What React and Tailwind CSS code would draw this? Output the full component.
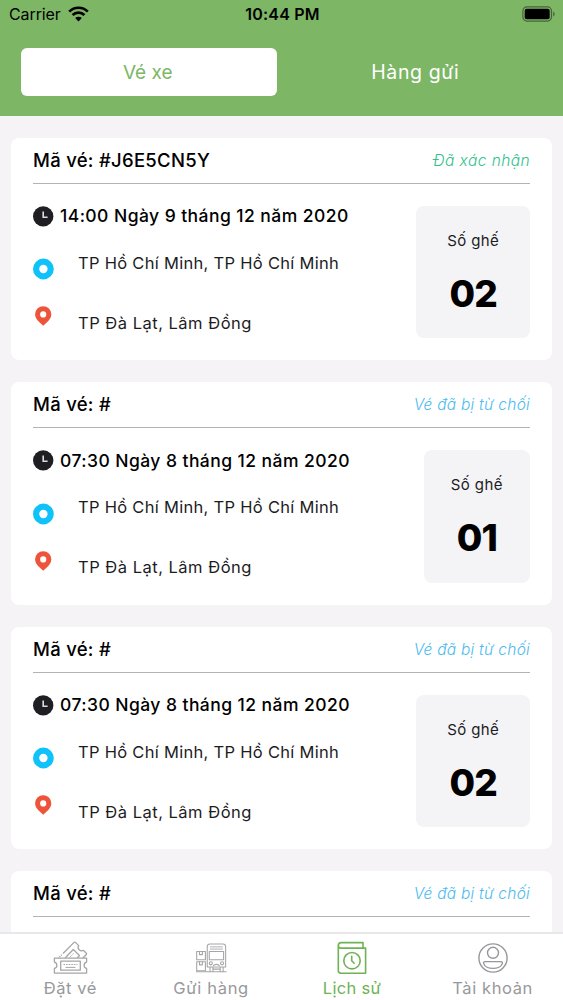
const tickets = [
  {
    code: "J6E5CN5Y",
    status: "Đã xác nhận",
    statusCls: "text-[#2fc18c] tracking-[0.4px]",
    time: "14:00 Ngày 9 tháng 12 năm 2020",
    seat: "02",
  },
  {
    code: "",
    status: "Vé đã bị từ chối",
    statusCls: "text-[#4dbbee] tracking-[0.25px]",
    time: "07:30 Ngày 8 tháng 12 năm 2020",
    seat: "01",
  },
  {
    code: "",
    status: "Vé đã bị từ chối",
    statusCls: "text-[#4dbbee] tracking-[0.25px]",
    time: "07:30 Ngày 8 tháng 12 năm 2020",
    seat: "02",
  },
  {
    code: "",
    status: "Vé đã bị từ chối",
    statusCls: "text-[#4dbbee] tracking-[0.25px]",
  },
];

function WifiIcon() {
  return (
    <svg width="21" height="16" viewBox="0 0 21 16" fill="none" stroke="#000" strokeWidth="2.7">
      <path d="M1.2 5.6a13.2 13.2 0 0 1 18.6 0" />
      <path d="M4.6 9a8.4 8.4 0 0 1 11.8 0" />
      <path d="M10.5 15.4 7.2 12a4.7 4.7 0 0 1 6.6 0Z" fill="#000" stroke="none" />
    </svg>
  );
}

function BatteryIcon() {
  return (
    <svg width="34" height="16" viewBox="0 0 34 16">
      <rect x="0.9" y="0.9" width="28.6" height="14.2" rx="4" fill="none" stroke="#000" strokeOpacity="0.45" strokeWidth="1.2" />
      <rect x="2.7" y="2.8" width="25" height="10.4" rx="2" />
      <path d="M31.3 5.5c1.7.7 1.7 4.3 0 5Z" opacity="0.5" />
    </svg>
  );
}

function ClockIcon() {
  return (
    <svg width="21" height="22" viewBox="0 0 21 22" fill="none">
      <circle cx="10.2" cy="10.4" r="10.2" fill="#1f1e23" />
      <path d="M10.2 5.4v5.8h4.4" stroke="#dddde0" strokeWidth="1.6" />
    </svg>
  );
}

function StartIcon() {
  return (
    <svg width="21" height="22" viewBox="0 0 21 22">
      <circle cx="10.4" cy="11" r="7.3" fill="none" stroke="#0fc2fa" strokeWidth="6.2" />
    </svg>
  );
}

function PinIcon() {
  return (
    <svg width="21" height="22" viewBox="0.8 0 21 22">
      <path
        fill="#ee5439"
        fillRule="evenodd"
        d="M11 1.2a8.1 8.1 0 0 0-8.1 8.1c0 2.9 1.4 4.9 3 6.6L11 20.8l5.1-4.9c1.6-1.7 3-3.7 3-6.6A8.1 8.1 0 0 0 11 1.2Zm0 5.1a3.1 3.1 0 1 1 0 6.2 3.1 3.1 0 0 1 0-6.2Z"
      />
    </svg>
  );
}

function TicketsIcon() {
  return (
    <svg width="35" height="34" viewBox="0 0 34 34" fill="none" stroke="#a5a5a8" strokeWidth="1.3" strokeLinejoin="round">
      <path d="M.9 17.1h32.2v4a3.3 3.3 0 0 0 0 6.4v4.6H.9v-4.6a3.3 3.3 0 0 0 0-6.4Z" />
      <rect x="7.2" y="20.2" width="19.6" height="9" />
      <path d="M10 23.5h14" strokeWidth="1" strokeDasharray="1.6 1" />
      <path d="M12 26.4h10" strokeWidth="1" />
      <path d="M9.5 12.5 20.3 1.6c.6-.6 1.3-.6 1.9 0l3 3a3.4 3.4 0 0 0 4.6 4.7l2.8 2.6c.6.6.6 1.2 0 1.8L29.3 17" />
      <path d="M8.3 13.7 5 17" strokeDasharray="1.2 1" />
      <path d="m11.8 16.8 8-8.3 6.2 6-2.3 2.5" />
      <path d="m16.2 16.4 4.2-4.2" strokeWidth="1" strokeDasharray="1.6 1" />
    </svg>
  );
}

function CargoIcon() {
  return (
    <svg width="31" height="30" viewBox="0 0 32 31" fill="none" stroke="#a5a5a8" strokeWidth="1.1" strokeLinejoin="round">
      <path d="M.7 8.8h9v8.6h-9zM.7 19.4h9v9.2h-9z" />
      <path d="M3.6 8.8v3.2h3V8.8M3.6 19.4v3.2h3v-3.2" />
      <path d="M11.6 24.8V4c0-1.9 1-2.9 2.9-2.9h13.2c1.9 0 2.9 1 2.9 2.9v20.8Z" />
      <path d="M14.4 4h13.4M14.4 6.3h13.4" strokeWidth="0.9" />
      <path d="M13.7 8.7h14.8v8.6H13.7z" />
      <circle cx="15.3" cy="21" r="1.6" />
      <circle cx="26.9" cy="21" r="1.6" />
      <path d="M17.8 23.6c1.4-2 5.2-2 6.6 0" />
      <path d="M14.5 24.8v4.4M17.5 24.8v4.4M25 24.8v4.4M28 24.8v4.4M17.5 27H25M0 29.7h31.5" />
    </svg>
  );
}

function HistoryIcon() {
  return (
    <svg width="30" height="34" viewBox="0 0 30 34" fill="none" stroke="#6fb356" strokeWidth="1.6" strokeLinejoin="round" strokeLinecap="round">
      <path d="M26 7.1V1.6H4.2a2.9 2.9 0 0 0-2.9 2.8c0 1.6 1.2 2.7 2.9 2.7h24.4v25.1H3.9a2.6 2.6 0 0 1-2.6-2.6V4.4" />
      <circle cx="15" cy="19.7" r="8.2" />
      <path d="M14.7 15.4v4.4l2.4 2.5" />
    </svg>
  );
}

function AccountIcon() {
  return (
    <svg width="30" height="30" viewBox="0 0 30 30" fill="none" stroke="#97979b" strokeWidth="1.4">
      <circle cx="15" cy="15" r="14.1" />
      <circle cx="15" cy="9.8" r="5.5" />
      <path d="M7.2 18.6h15.6c1.3 0 1.9.8 1.5 2-.9 2.9-5 4.8-9.3 4.8s-8.4-1.9-9.3-4.8c-.4-1.2.2-2 1.5-2Z" />
    </svg>
  );
}

function TicketCard({ ticket }) {
  return (
    <article className="h-[222.5px] shrink-0 rounded-lg bg-white px-[22px]">
      <div className="flex h-[46px] items-center justify-between border-b border-[#b3b3b6]">
        <h2 className="pt-px text-[18.5px] font-[450] tracking-[0.28px] text-black">Mã vé: #{ticket.code}</h2>
        <span className={`pt-px text-[15.5px] font-light italic ${ticket.statusCls}`}>{ticket.status}</span>
      </div>

      {ticket.time && (
        <div className="flex items-start justify-between pt-[22px]">
          <div>
            <div className="flex h-[22px] items-center gap-1.5">
              <ClockIcon />
              <span className="text-[17.5px] font-[450] tracking-[0.44px] whitespace-nowrap text-black">{ticket.time}</span>
            </div>
            <div className="mt-[21px] flex gap-[24px]">
              <div className="flex flex-col gap-[25px] pt-[9.5px]">
                <StartIcon />
                <PinIcon />
              </div>
              <div className="flex flex-col gap-9 pt-0.5 text-[16.5px] leading-6 whitespace-nowrap text-[#1c1c1e]">
                <span className="tracking-[0.29px]">TP Hồ Chí Minh, TP Hồ Chí Minh</span>
                <span className="tracking-[0.5px]">TP Đà Lạt, Lâm Đồng</span>
              </div>
            </div>
          </div>

          <div className="flex h-[132.5px] flex-col items-center rounded-lg bg-[#f4f3f6] px-[33px] pt-[23px]">
            <span className="-mx-4 text-[15px] leading-6 tracking-[0.4px] whitespace-nowrap text-[#1c1c1e]">Số ghế</span>
            <span className="mt-[21px] text-[37px] leading-[40px] font-extrabold tracking-[-0.8px] text-black">{ticket.seat}</span>
          </div>
        </div>
      )}
    </article>
  );
}

const navCls = "flex flex-1 flex-col items-center text-[16.5px] leading-5 whitespace-nowrap";

export default function App() {
  return (
    <div className="flex h-[1000px] w-[563px] flex-col overflow-hidden bg-[#f5f3f6] font-['Inter',sans-serif]">
      <header className="h-[116px] shrink-0 bg-[#7db665]">
        <div className="grid h-7 grid-cols-3 items-center pr-[7px] pl-[9px] text-black">
          <div className="flex items-center gap-[7px]">
            <span className="text-[16px] leading-none tracking-[-0.1px]">Carrier</span>
            <WifiIcon />
          </div>
          <span className="text-center text-[16px] leading-none font-semibold tracking-[0.2px]">10:44 PM</span>
          <div className="flex justify-end">
            <BatteryIcon />
          </div>
        </div>
        <div className="mt-[19.5px] flex gap-[11px] px-[20.5px]">
          <button type="button" className="h-[48px] flex-1 rounded-md bg-white pt-1 pr-0.5 text-[19px] text-[#7db665]">
            Vé xe
          </button>
          <button type="button" className="h-[48px] flex-1 pt-0.5 text-[19.5px] tracking-[0.6px] text-white">
            Hàng gửi
          </button>
        </div>
      </header>

      <main className="flex min-h-0 flex-1 flex-col gap-[22px] overflow-hidden px-[11px] pt-[21.5px]">
        {tickets.map((ticket, i) => (
          <TicketCard key={i} ticket={ticket} />
        ))}
      </main>

      <nav className="flex h-[68px] shrink-0 border-t-2 border-[#e8e7ea] bg-white text-[#98989b]">
        <div className={navCls}>
          <div className="flex h-[44px] items-center pt-1">
            <TicketsIcon />
          </div>
          <span className="tracking-[0.6px]">Đặt vé</span>
        </div>
        <div className={navCls}>
          <div className="flex h-[44px] items-center pt-1">
            <CargoIcon />
          </div>
          <span className="tracking-[0.7px]">Gửi hàng</span>
        </div>
        <div className={`${navCls} text-[#6fb356]`}>
          <div className="flex h-[44px] items-center pt-1">
            <HistoryIcon />
          </div>
          <span className="tracking-[0.3px]">Lịch sử</span>
        </div>
        <div className={navCls}>
          <div className="flex h-[44px] items-center pt-1">
            <AccountIcon />
          </div>
          <span className="tracking-[0.6px]">Tài khoản</span>
        </div>
      </nav>
    </div>
  );
}
